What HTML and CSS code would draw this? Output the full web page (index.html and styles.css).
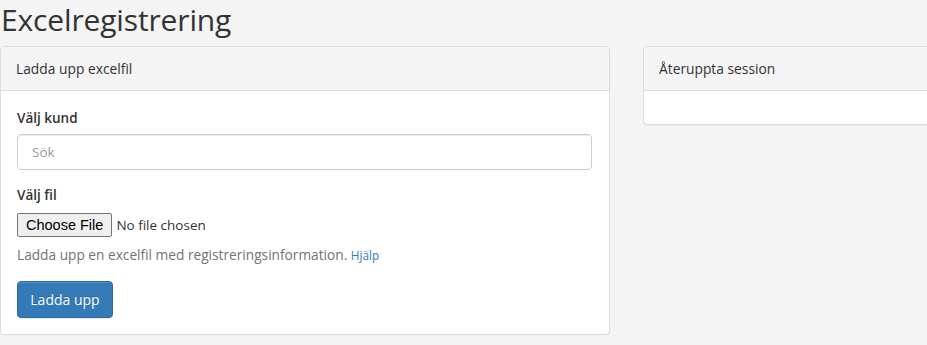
FILE: index.html
```html
<!DOCTYPE html>
<html lang="sv">
<head>
<meta charset="utf-8">
<title>Excelregistrering</title>
<link rel="stylesheet" href="styles.css">
</head>
<body>
<div class="page">
  <h1 class="title">Excelregistrering</h1>
  <div class="row">
    <div class="panel panel-left">
      <div class="panel-heading">Ladda upp excelfil</div>
      <div class="panel-body">
        <div class="form-group">
          <label class="label" for="kund">Välj kund</label>
          <input id="kund" class="form-control" type="text" placeholder="Sök">
        </div>
        <div class="form-group">
          <label class="label" for="fil">Välj fil</label>
          <input id="fil" class="file" type="file">
          <p class="help">Ladda upp en excelfil med registreringsinformation. <a class="help-link" href="#">Hjälp</a></p>
        </div>
        <button class="btn" type="button">Ladda upp</button>
      </div>
    </div>
    <div class="panel panel-right">
      <div class="panel-heading">Återuppta session</div>
      <div class="panel-body empty"></div>
    </div>
  </div>
</div>
</body>
</html>
```
FILE: styles.css
```css
html, body {
  margin: 0;
  padding: 0;
  background: #f4f4f4;
  overflow: hidden;
}
body {
  font-family: "Open Sans", "Noto Sans", sans-serif;
  font-size: 14px;
  color: #333;
}
.page {
  width: 1000px;
}
.title {
  margin: 0;
  padding: 2px 0 0 1px;
  height: 44px;
  font-weight: 400;
  font-size: 30px;
  line-height: 36px;
  color: #333;
  letter-spacing: -0.15px;
}
.row {
  display: flex;
  align-items: flex-start;
  gap: 33px;
}
.panel {
  background: #fff;
  border: 1px solid #ddd;
  border-radius: 4px;
  box-shadow: 0 1px 1px rgba(0,0,0,0.05);
  box-sizing: border-box;
}
.panel-left {
  width: 610px;
}
.panel-right {
  width: 320px;
}
.panel-heading {
  background: #f4f4f4;
  border-bottom: 1px solid #ddd;
  border-radius: 3px 3px 0 0;
  padding: 0 15px;
  height: 43px;
  line-height: 44px;
  font-size: 13.8px;
  color: #333;
}
.panel-body {
  padding: 15px 15px 16px 16px;
}
.panel-body.empty {
  padding: 0;
  height: 33px;
}
.form-group {
  margin-bottom: 15px;
}
.label {
  display: block;
  font-weight: 600;
  font-size: 13.5px;
  line-height: 20px;
  margin-bottom: 6px;
  margin-top: 2px;
}
.form-control {
  display: block;
  box-sizing: border-box;
  width: 575px;
  height: 36px;
  padding: 6px 14px;
  border: 1px solid #ccc;
  border-radius: 4px;
  font-family: inherit;
  font-size: 13.5px;
  color: #555;
  background: #fff;
  box-shadow: inset 0 1px 1px rgba(0,0,0,0.075);
}
.form-control::placeholder {
  color: #999;
}
.file {
  display: block;
  font-family: "Open Sans", sans-serif;
  font-size: 13.5px;
  margin-top: 8px;
  color: #333;
}
.file::file-selector-button {
  font-family: "Liberation Sans", Arial, sans-serif;
  font-size: 14.5px;
  padding: 1px 8px;
  height: 24px;
  margin-right: 4px;
  border: 1px solid #767676;
  border-radius: 2px;
  background: #efefef;
  color: #000;
}
.help {
  margin: 8px 0 0;
  font-size: 13.7px;
  line-height: 20px;
  color: #737373;
}
.help-link {
  color: #337ab7;
  font-size: 11.8px;
  text-decoration: none;
}
.btn {
  display: block;
  margin-top: 16px;
  width: 96px;
  height: 37px;
  padding: 0;
  font-family: inherit;
  font-size: 14px;
  color: #fff;
  background: #337ab7;
  border: 1px solid #2e6da4;
  border-radius: 4px;
  text-shadow: 0 -1px 0 rgba(0,0,0,0.2);
  box-shadow: inset 0 1px 0 rgba(255,255,255,0.15), 0 1px 1px rgba(0,0,0,0.075);
}
```
